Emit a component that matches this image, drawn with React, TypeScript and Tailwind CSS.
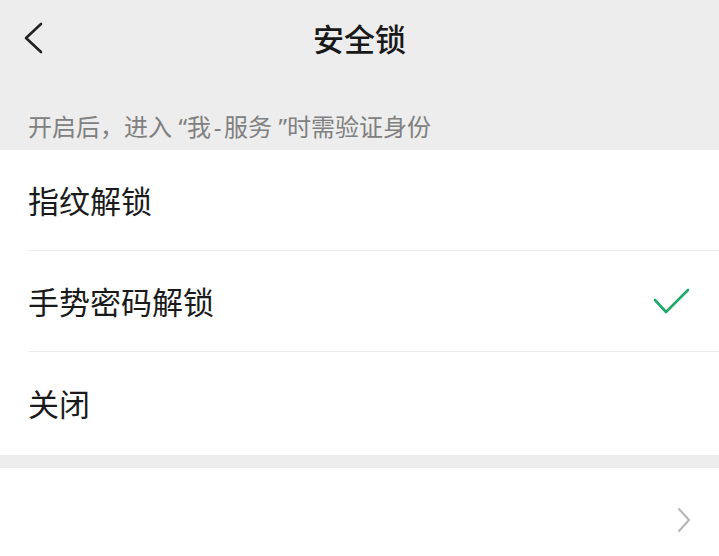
import React from "react";

export default function App() {
  return (
    <div className="w-[719px] h-[556px] overflow-hidden bg-[#ededed] font-['Noto_Sans_CJK_SC','Noto_Sans',sans-serif]">
      {/* nav bar */}
      <div className="grid h-[75px] grid-cols-[1fr_auto_1fr] items-center">
        <div className="flex items-center pl-[22px]">
          <svg width="22" height="34" viewBox="0 0 22 34" fill="none">
            <polyline points="19,3 4,17 19,31" stroke="#222" strokeWidth="2.6" strokeLinecap="round" strokeLinejoin="round" />
          </svg>
        </div>
        <div className="text-[31px] font-medium leading-none text-[#191919]">安全锁</div>
        <div />
      </div>

      {/* hint */}
      <div className="h-[75px] px-[28px] pt-[33px] text-[24px] leading-[36px] text-[#808080]">
        开启后，进入
        <span className="inline-block w-[15px] text-right font-['Noto_Sans',sans-serif]">“</span>
        我
        <span className="inline-block w-[13px] text-center font-['Noto_Sans',sans-serif]">-</span>
        服务
        <span className="inline-block w-[15px] text-right font-['Noto_Sans',sans-serif]">”</span>
        时需验证身份
      </div>

      {/* options */}
      <div className="bg-white pl-[28px]">
        <div className="flex h-[101px] items-center border-b border-[#ececec] pr-[29px] text-[31px] text-[#1a1a1a]">
          指纹解锁
        </div>
        <div className="flex h-[101px] items-center justify-between border-b border-[#ececec] pr-[29px] text-[31px] text-[#1a1a1a]">
          <span>手势密码解锁</span>
          <svg width="37" height="27" viewBox="0 0 37 27" fill="none">
            <polyline points="2,12 13,24 35,2" stroke="#22a86a" strokeWidth="2.6" strokeLinecap="round" strokeLinejoin="round" />
          </svg>
        </div>
        <div className="flex h-[103px] items-center pr-[29px] text-[31px] text-[#1a1a1a]">关闭</div>
      </div>

      <div className="h-[13px] bg-[#ededed]" />

      <div className="flex h-[104px] items-center justify-end bg-white pr-[28px]">
        <svg width="14" height="26" viewBox="0 0 14 26" fill="none">
          <polyline points="2,2 12,13 2,24" stroke="#b5b5b5" strokeWidth="2" strokeLinecap="round" strokeLinejoin="round" />
        </svg>
      </div>
    </div>
  );
}
